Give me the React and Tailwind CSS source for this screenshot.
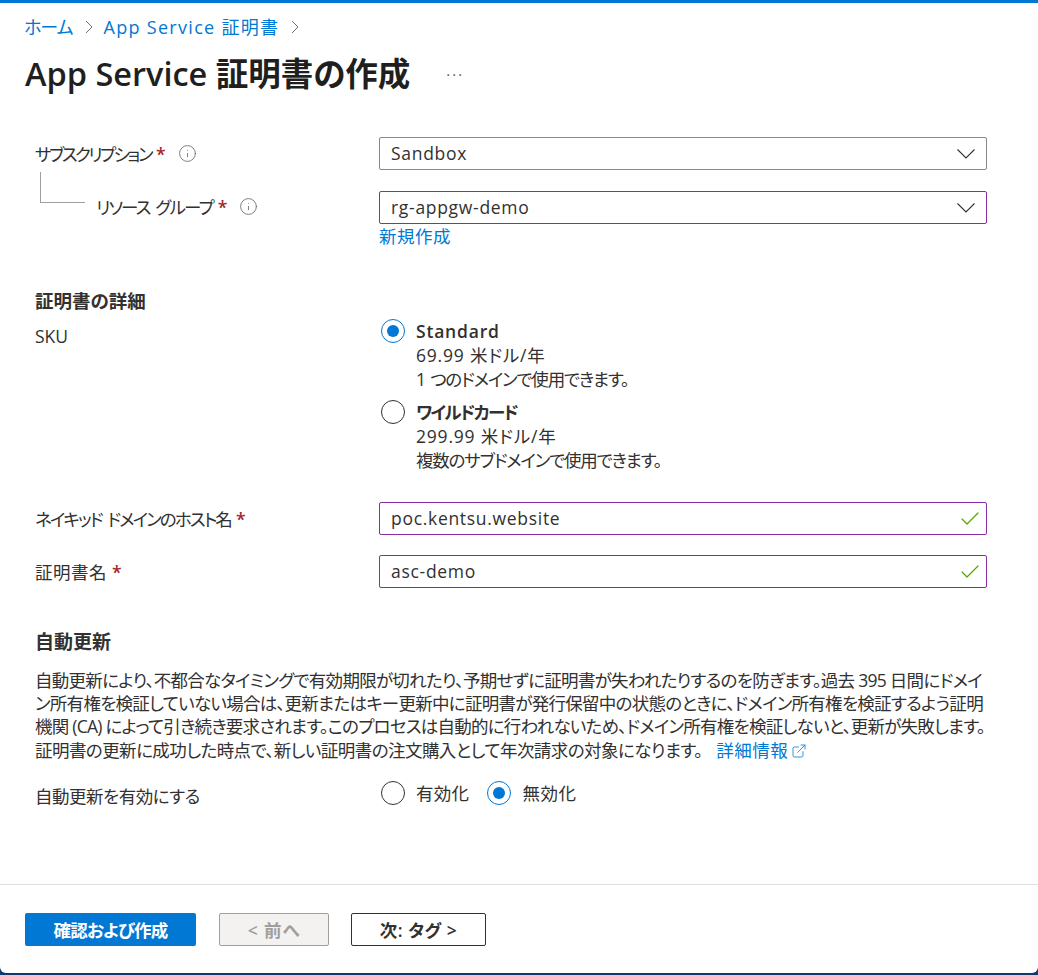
import React from 'react'
import { Check, Info, ExternalLink } from 'lucide-react'

const Req = () => <span className="text-[#a4262c] ml-[5px] font-semibold tracking-normal">*</span>

const Radio = ({ checked }) => (
  <span className={`w-6 h-6 rounded-full border flex items-center justify-center bg-white shrink-0 ${checked ? 'border-[#0078d4]' : 'border-[#323130]'}`}>
    {checked && <span className="w-3 h-3 rounded-full bg-[#0078d4]" />}
  </span>
)

const Crumb = () => (
  <svg width="8" height="14" viewBox="0 0 8 14" fill="none" stroke="#605e5c" strokeWidth="0.9">
    <path d="M1 1l6 6-6 6" />
  </svg>
)

const SelectBox = ({ value, purple }) => (
  <div className={`h-[33px] rounded-[2px] border flex items-center justify-between pl-[11px] pr-[11px] ${purple ? 'border-[#8a2da5]' : 'border-[#8a8886]'}`}>
    <span className="tracking-[0.7px] -mt-[1px]">{value}</span>
    <svg width="18" height="10" viewBox="0 0 18 10" fill="none" stroke="#323130" strokeWidth="1.1">
      <path d="M0.5 0.5L9 9l8.5-8.5" />
    </svg>
  </div>
)

const TextBox = ({ value }) => (
  <div className="h-[33px] rounded-[2px] border border-[#8a2da5] flex items-center justify-between pl-[11px] pr-[4px]">
    <span className="tracking-[0.7px] -mt-[1px]">{value}</span>
    <Check size={24} strokeWidth={1.2} className="text-[#57a300]" />
  </div>
)

const App = () => {
  return (
    <div className="relative w-[1038px] h-[975px] overflow-hidden bg-[#0f3a6e] font-['Open_Sans','Noto_Sans_CJK_JP',sans-serif] [font-feature-settings:'palt'] text-[17.5px] leading-[24px] text-[#323130]">
      <div className="h-[973px] bg-white rounded-bl-[6px] rounded-br-[6px] border-t-[3px] border-[#0078d4] flex flex-col">
        {/* breadcrumb */}
        <div className="flex items-center pl-6 pt-3 h-[36px] text-[#0078d4] text-[18px]">
          <span className="tracking-[-1px]">ホーム</span>
          <span className="ml-[12px] mr-[11px]"><Crumb /></span>
          <span className="tracking-[1.3px]">App Service 証明書</span>
          <span className="ml-[12px]"><Crumb /></span>
        </div>

        <div className="flex items-center pl-[25px] mt-[10px] h-[50px]">
          <h1 className="text-[32.5px] font-semibold leading-[40px] text-[#201f1e]">App Service 証明書の作成</h1>
          <span className="ml-[36px] text-[#605e5c] text-[15px] tracking-[2px]">···</span>
        </div>

        {/* subscription */}
        <div className="grid grid-cols-[344px_608px] pl-[35px] mt-[38px]">
          <div className="flex items-center h-[33px]">
            <span className="tracking-[-2.5px]">サブスクリプション</span><Req />
            <Info size={19} strokeWidth={1} className="ml-[12px] text-[#605e5c]" />
          </div>
          <SelectBox value="Sandbox" />
        </div>

        <div className="grid grid-cols-[344px_608px] pl-[35px] mt-[21px]">
          <div className="relative flex items-center h-[33px] pl-[61px] -mt-[1px]">
            <div className="absolute left-[5px] -top-[18px] w-[45px] h-[31px] border-l border-b border-[#a19f9d]" />
            <span className="tracking-[-1.8px] [word-spacing:3px]">リソース グループ</span><Req />
            <Info size={19} strokeWidth={1} className="ml-[12px] text-[#605e5c]" />
          </div>
          <div>
            <SelectBox value="rg-appgw-demo" purple />
            <div className="text-[#0078d4] tracking-[0.5px]">新規作成</div>
          </div>
        </div>

        {/* details */}
        <div className="pl-[35px] mt-[41px] font-semibold text-[18.5px]">証明書の詳細</div>
        <div className="grid grid-cols-[344px_608px] pl-[35px] mt-[10px]">
          <div className="pt-[1px]">SKU</div>
          <div>
            <div className="flex gap-[11px] pl-[2px] -mt-[4px]">
              <Radio checked />
              <div>
                <div className="font-semibold tracking-[0.8px]">Standard</div>
                <div className="tracking-[0.8px]">69.99 米ドル/年</div>
                <div className="tracking-[-1.2px] [word-spacing:2px]">1 つのドメインで使用できます。</div>
              </div>
            </div>
            <div className="flex gap-[11px] pl-[2px] mt-[9px]">
              <Radio />
              <div>
                <div className="font-semibold tracking-[-1.7px]">ワイルドカード</div>
                <div className="tracking-[0.8px]">299.99 米ドル/年</div>
                <div className="tracking-[-1.2px]">複数のサブドメインで使用できます。</div>
              </div>
            </div>
          </div>
        </div>

        {/* domain, name */}
        <div className="grid grid-cols-[344px_608px] pl-[35px] mt-[30px] items-center">
          <div><span className="tracking-[-1.9px] [word-spacing:3px]">ネイキッド ドメインのホスト名</span><Req /></div>
          <TextBox value="poc.kentsu.website" />
        </div>
        <div className="grid grid-cols-[344px_608px] pl-[35px] mt-[20px] items-center">
          <div><span className="tracking-[0.5px]">証明書名</span><Req /></div>
          <TextBox value="asc-demo" />
        </div>

        {/* auto renew */}
        <div className="pl-[35px] mt-[42px] font-semibold text-[19px]">自動更新</div>
        <div className="pl-[35px] mt-[15px] leading-[23.2px] whitespace-nowrap">
          <p className="tracking-[-0.72px]">自動更新により、不都合なタイミングで有効期限が切れたり、予期せずに証明書が失われたりするのを防ぎます。過去 395 日間にドメイ</p>
          <p className="tracking-[-0.72px]">ン所有権を検証していない場合は、更新またはキー更新中に証明書が発行保留中の状態のときに、ドメイン所有権を検証するよう証明</p>
          <p className="tracking-[-0.75px]">機関 (CA) によって引き続き要求されます。このプロセスは自動的に行われないため、ドメイン所有権を検証しないと、更新が失敗します。</p>
          <p className="tracking-[-0.55px]">
            証明書の更新に成功した時点で、新しい証明書の注文購入として年次請求の対象になります。
            <span className="text-[#0078d4] ml-[14px] tracking-[0.5px]">詳細情報<ExternalLink size={16} strokeWidth={1.2} className="inline ml-[3px] -mt-[2px]" /></span>
          </p>
        </div>

        <div className="grid grid-cols-[344px_608px] pl-[35px] mt-[18px]">
          <div className="pt-[4px] tracking-[-0.5px]">自動更新を有効にする</div>
          <div className="flex items-center pl-[2px] h-[24px] mt-[1px]">
            <Radio />
            <span className="ml-[11px] tracking-[0.3px]">有効化</span>
            <span className="ml-[18px]"><Radio checked /></span>
            <span className="ml-[11px] tracking-[0.5px]">無効化</span>
          </div>
        </div>

        {/* footer */}
        <div className="mt-auto border-t border-[#e1dfdd] h-[89px] flex items-start pl-[25px] pt-[28px] font-semibold">
          <div className="w-[171px] h-[33px] rounded-[2px] bg-[#0078d4] text-white flex items-center justify-center tracking-[-0.8px]">確認および作成</div>
          <div className="w-[110px] h-[33px] ml-[23px] rounded-[2px] bg-[#f3f2f1] border border-[#a19f9d] text-[#a19f9d] flex items-center justify-center tracking-[0.9px]">&lt; 前へ</div>
          <div className="w-[135px] h-[33px] ml-[22px] rounded-[2px] bg-white border border-[#323130] flex items-center justify-center tracking-[0.5px]">次: タグ &gt;</div>
        </div>
      </div>
    </div>
  )
}

export default App
